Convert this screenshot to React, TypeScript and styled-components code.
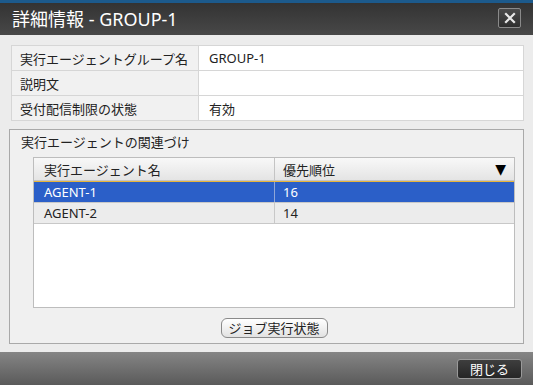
import React from "react";
import styled, { createGlobalStyle } from "styled-components";

const GlobalStyle = createGlobalStyle`
	body {
		margin: 0;
		background: #ffffff;
		font-family: "Noto Sans", "Noto Sans CJK JP", sans-serif;
	}
`;

const info = [
	{ label: "実行エージェントグループ名", value: "GROUP-1" },
	{ label: "説明文", value: "" },
	{ label: "受付配信制限の状態", value: "有効" },
];

const agents = [
	{ name: "AGENT-1", priority: "16", selected: true },
	{ name: "AGENT-2", priority: "14", selected: false },
];

export default function App() {
	return (
		<>
			<GlobalStyle />
			<Window>
				<TitleBar>
					<Title>詳細情報 - GROUP-1</Title>
					<CloseIcon aria-label="close">
						<svg width="12" height="12" viewBox="0 0 12 12">
							<path d="M2 2 L10 10 M10 2 L2 10" stroke="#e8e8e8" strokeWidth="2.2" strokeLinecap="square" />
						</svg>
					</CloseIcon>
				</TitleBar>
				<Body>
					<InfoTable>
						{info.map((row) => (
							<InfoRow key={row.label}>
								<InfoLabel>{row.label}</InfoLabel>
								<InfoValue>{row.value}</InfoValue>
							</InfoRow>
						))}
					</InfoTable>
					<GroupBox>
						<GroupTitle>実行エージェントの関連づけ</GroupTitle>
						<Grid>
							<HeadRow>
								<HeadCell>実行エージェント名</HeadCell>
								<HeadCell $last>
									優先順位
									<SortMark>▼</SortMark>
								</HeadCell>
							</HeadRow>
							{agents.map((a) => (
								<Row key={a.name} $selected={a.selected}>
									<Cell $selected={a.selected}>{a.name}</Cell>
									<Cell $selected={a.selected} $last>{a.priority}</Cell>
								</Row>
							))}
						</Grid>
						<ButtonRow>
							<LightButton>ジョブ実行状態</LightButton>
						</ButtonRow>
					</GroupBox>
				</Body>
				<Footer>
					<DarkButton>閉じる</DarkButton>
				</Footer>
			</Window>
		</>
	);
}

const Window = styled.div`
	width: 533px;
	height: 385px;
	display: flex;
	flex-direction: column;
`;

const TitleBar = styled.div`
	height: 32px;
	flex: 0 0 32px;
	border-top: 3px solid #1c5a8c;
	background: linear-gradient(#333333, #484848);
	display: flex;
	align-items: center;
	justify-content: space-between;
	padding: 0 12px 0 12px;
`;

const Title = styled.div`
	color: #ffffff;
	font-size: 18px;
	line-height: 22px;
	margin-top: -1px;
`;

const CloseIcon = styled.div`
	width: 21px;
	height: 18px;
	border: 1px solid #8a8a8a;
	border-radius: 2px;
	background: linear-gradient(#4a4a4a, #2e2e2e);
	display: flex;
	align-items: center;
	justify-content: center;
	margin-top: -2px;
`;

const Body = styled.div`
	flex: 1;
	background: #ececec;
	padding: 10px 9px 0 9px;
	display: flex;
	flex-direction: column;
	font-size: 13px;
	color: #222;
`;

const InfoTable = styled.div`
	margin: 0 0 0 2px;
	border: 1px solid #d6d6d6;
	display: flex;
	flex-direction: column;
`;

const InfoRow = styled.div`
	display: grid;
	grid-template-columns: 187px 1fr;
	height: 24px;
	& + & {
		border-top: 1px solid #d6d6d6;
	}
`;

const InfoLabel = styled.div`
	background: #f1f1f1;
	border-right: 1px solid #d6d6d6;
	padding-left: 8px;
	display: flex;
	align-items: center;
`;

const InfoValue = styled.div`
	background: #ffffff;
	padding-left: 10px;
	display: flex;
	align-items: center;
`;

const GroupBox = styled.div`
	margin-top: 8px;
	height: 215px;
	box-sizing: border-box;
	border: 1px solid #a9a9a9;
	background: #f0f0f0;
	display: flex;
	flex-direction: column;
	padding: 2px 8px 5px 23px;
`;

const GroupTitle = styled.div`
	height: 20px;
	line-height: 20px;
	margin-left: -12px;
`;

const Grid = styled.div`
	margin-top: 5px;
	height: 151px;
	box-sizing: border-box;
	border: 1px solid #bdbdbd;
	background: #ffffff;
	display: flex;
	flex-direction: column;
`;

const HeadRow = styled.div`
	display: grid;
	grid-template-columns: 241px 1fr;
	height: 22px;
	border-bottom: 1px solid #c4c4c4;
	background: linear-gradient(#f8f8f8, #e4e4e4);
`;

const HeadCell = styled.div<{ $last?: boolean }>`
	display: flex;
	align-items: center;
	justify-content: space-between;
	padding: 0 8px 0 ${(p) => (p.$last ? 8 : 10)}px;
	border-right: ${(p) => (p.$last ? "none" : "1px solid #c4c4c4")};
`;

const SortMark = styled.span`
	font-size: 14px;
	color: #000;
	font-family: "DejaVu Sans", sans-serif;
`;

const Row = styled.div<{ $selected?: boolean }>`
	display: grid;
	grid-template-columns: 241px 1fr;
	box-sizing: border-box;
	background: ${(p) => (p.$selected ? "#2b5fc8" : "#ececec")};
	border-top: ${(p) => (p.$selected ? "1px solid #e7b53c" : "none")};
	border-bottom: 1px solid #c8c8c8;
	height: ${(p) => (p.$selected ? 22 : 21)}px;
`;

const Cell = styled.div<{ $selected?: boolean; $last?: boolean }>`
	display: flex;
	align-items: center;
	padding-left: ${(p) => (p.$last ? 8 : 10)}px;
	color: ${(p) => (p.$selected ? "#ffffff" : "#222")};
	border-right: ${(p) => (p.$last ? "none" : p.$selected ? "1px solid #8fa6d8" : "1px solid #c8c8c8")};
`;

const ButtonRow = styled.div`
	display: flex;
	justify-content: center;
	margin-top: 10px;
`;

const LightButton = styled.button`
	width: 107px;
	height: 20px;
	padding: 0;
	border: 1px solid #8a8a8a;
	border-radius: 6px;
	background: linear-gradient(#ffffff, #e2e2e2);
	font-family: inherit;
	font-size: 13px;
	color: #222;
	line-height: 18px;
`;

const Footer = styled.div`
	height: 33px;
	flex: 0 0 33px;
	background: linear-gradient(#858585, #5a5a5a);
	display: flex;
	align-items: center;
	justify-content: flex-end;
	padding-right: 11px;
`;

const DarkButton = styled.button`
	width: 65px;
	height: 20px;
	padding: 0;
	border: 1px solid #9a9a9a;
	border-radius: 3px;
	background: linear-gradient(#3e3e3e, #262626);
	color: #ffffff;
	font-family: inherit;
	font-size: 13px;
	line-height: 18px;
	margin-top: 1px;
`;
